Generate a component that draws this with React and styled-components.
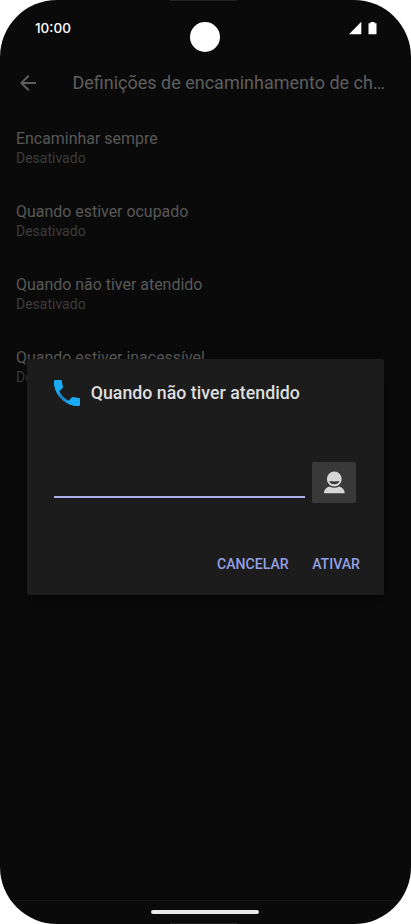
import styled, { createGlobalStyle } from "styled-components";

const settings = [
    { title: 'Encaminhar sempre', status: 'Desativado' },
    { title: 'Quando estiver ocupado', status: 'Desativado' },
    { title: 'Quando não tiver atendido', status: 'Desativado' },
    { title: 'Quando estiver inacessível', status: 'Desativado' },
]

const App = () => {
    return (
        <>
            <GlobalStyle />
            <Screen>
                <StatusBar>
                    <Time>10:00</Time>
                    <StatusIcons viewBox="0 0 28 14">
                        <path d="M0 13.2 L12.3 0.8 V13.2 Z" />
                        <path d="M19.5 2.2 h2 v-1.2 h4 v1.2 h2 v11 h-8 Z" />
                    </StatusIcons>
                </StatusBar>
                <Camera />
                <AppBar>
                    <BackIcon viewBox="0 0 24 24">
                        <path d="M20 11H7.83l5.59-5.59L12 4l-8 8 8 8 1.41-1.41L7.83 13H20v-2z" />
                    </BackIcon>
                    <Title>Definições de encaminhamento de ch…</Title>
                </AppBar>
                <List>
                    {settings.map((item) => (
                        <Item key={item.title}>
                            <ItemTitle>{item.title}</ItemTitle>
                            <ItemStatus>{item.status}</ItemStatus>
                        </Item>
                    ))}
                </List>
                <NavBar>
                    <NavHandle />
                </NavBar>
                <EdgeMark $side="top" />
                <EdgeMark $side="bottom" />
                <Dialog>
                    <DialogHeader>
                        <PhoneIcon viewBox="3 3 18 18">
                            <defs>
                                <linearGradient id="handset" x1="0" y1="0" x2="1" y2="1">
                                    <stop offset="0.3" stopColor="#1aaaf2" />
                                    <stop offset="0.48" stopColor="#1583c8" />
                                    <stop offset="0.62" stopColor="#188fd8" />
                                    <stop offset="0.7" stopColor="#1aaaf2" />
                                </linearGradient>
                            </defs>
                            <path fill="url(#handset)" d="M6.62 10.79c1.44 2.83 3.76 5.14 6.59 6.59l2.2-2.2c.27-.27.67-.36 1.02-.24 1.12.37 2.33.57 3.57.57.55 0 1 .45 1 1V20c0 .55-.45 1-1 1-9.39 0-17-7.61-17-17 0-.55.45-1 1-1h3.5c.55 0 1 .45 1 1 0 1.25.2 2.45.57 3.57.11.35.03.74-.25 1.02l-2.2 2.2z" />
                            <path fill="#1aaaf2" d="M4 3h3.5c.55 0 1 .45 1 1 0 1.25.2 2.45.57 3.57.11.35.03.74-.25 1.02l-3.4 3.4C3.8 9.5 3 6.7 3 4c0-.55.45-1 1-1zM20 21c.55 0 1-.45 1-1v-3.49c0-.55-.45-1-1-1-1.24 0-2.45-.2-3.57-.57-.35-.12-.75-.03-1.02.24l-3.4 3.4C14.5 20.3 17.2 21 20 21z" />
                        </PhoneIcon>
                        <DialogTitle>Quando não tiver atendido</DialogTitle>
                    </DialogHeader>
                    <Field>
                        <NumberInput type="tel" />
                        <ContactButton>
                            <ContactIcon viewBox="0 0 22 24">
                                <circle cx="11.3" cy="8" r="7.4" />
                                <path d="M6.3 15.6 Q11.3 18 16.3 15.6 C19.6 16.8 21.6 18.8 21.7 22.2 H0.9 C1 18.8 3 16.8 6.3 15.6 Z" />
                                <path fill="#393939" d="M6.2 10 Q11.3 10.8 16.4 10 Q15.2 13.2 11.3 13.2 Q7.4 13.2 6.2 10 Z" />
                            </ContactIcon>
                        </ContactButton>
                    </Field>
                    <Actions>
                        <Action>CANCELAR</Action>
                        <Action>ATIVAR</Action>
                    </Actions>
                </Dialog>
            </Screen>
        </>
    );
};

export default App;

const GlobalStyle = createGlobalStyle`
    body {
        margin: 0;
        background: #fff;
        font-family: Roboto, sans-serif;
    }
`
const Screen = styled.div`
    position: relative;
    display: flex;
    flex-direction: column;
    width: 411px;
    height: 924px;
    overflow: hidden;
    border-radius: 57px;
    background: #0a0a0a;
`
const StatusBar = styled.div`
    display: flex;
    justify-content: space-between;
    align-items: center;
    box-sizing: border-box;
    height: 55px;
    padding: 0 34px 0 35px;
`
const Time = styled.span`
    color: #fff;
    font-family: Inter, sans-serif;
    font-size: 13.5px;
    font-weight: 500;
`
const StatusIcons = styled.svg`
    width: 28px;
    height: 14px;
    fill: #fff;
`
const Camera = styled.div`
    position: absolute;
    top: 22px;
    left: 190px;
    width: 30px;
    height: 30px;
    border-radius: 50%;
    background: #fff;
`
const AppBar = styled.div`
    display: flex;
    align-items: center;
    height: 56px;
    padding: 0 20px 0 16px;
`
const BackIcon = styled.svg`
    flex: none;
    width: 24px;
    height: 24px;
    margin-right: 32.4px;
    fill: #5e5e5e;
`
const Title = styled.h1`
    margin: 0;
    color: #5e5e5e;
    font-size: 18px;
    font-weight: 400;
    line-height: 24px;
    white-space: nowrap;
`
const List = styled.div`
    flex: 1;
    padding-top: 17px;
`
const Item = styled.div`
    height: 73.1px;
    padding: 0 16px;
`
const ItemTitle = styled.div`
    color: #585858;
    font-size: 15.95px;
    line-height: 21px;
`
const ItemStatus = styled.div`
    color: #3c3c3c;
    font-size: 14px;
    line-height: 19px;
`
const NavBar = styled.div`
    display: flex;
    justify-content: center;
    align-items: flex-start;
    box-sizing: border-box;
    height: 24px;
    padding: 9px 1px 0 0;
    border-top: 1px solid #151515;
`
const NavHandle = styled.div`
    width: 108px;
    height: 4px;
    border-radius: 2px;
    background: #e8e8e8;
`
const EdgeMark = styled.div`
    position: absolute;
    ${props => props.$side}: 0;
    left: 170px;
    width: 67px;
    height: 1px;
    background: #242424;
`
const Dialog = styled.div`
    position: absolute;
    top: 358.5px;
    left: 26.7px;
    display: flex;
    flex-direction: column;
    box-sizing: border-box;
    width: 357.3px;
    height: 236.5px;
    padding: 21px 24px 0 27.3px;
    border-radius: 2px;
    background: #1c1c1c;
    box-shadow: 0 8px 18px rgba(0, 0, 0, 0.35);
`
const DialogHeader = styled.div`
    display: flex;
    align-items: center;
    height: 27px;
`
const PhoneIcon = styled.svg`
    flex: none;
    width: 26px;
    height: 26px;
    margin-right: 10.7px;
`
const DialogTitle = styled.h2`
    margin: 0;
    color: #dedede;
    font-size: 17.8px;
    font-weight: 500;
    line-height: 22px;
    white-space: nowrap;
`
const Field = styled.div`
    display: flex;
    align-items: flex-start;
    gap: 7.5px;
    margin-top: 55.5px;
`
const NumberInput = styled.input`
    width: 251px;
    height: 36px;
    box-sizing: border-box;
    padding: 0;
    border: none;
    border-bottom: 2px solid #a9b0ea;
    outline: none;
    background: transparent;
    color: #e2e2e2;
    font-size: 18px;
`
const ContactButton = styled.button`
    display: flex;
    flex: none;
    justify-content: center;
    align-items: center;
    width: 44px;
    height: 41px;
    padding: 0;
    border: none;
    border-radius: 2px;
    background: #393939;
`
const ContactIcon = styled.svg`
    width: 22px;
    height: 24px;
    fill: #d6d6d6;
`
const Actions = styled.div`
    display: flex;
    justify-content: flex-end;
    gap: 23.5px;
    margin-top: 50px;
`
const Action = styled.button`
    padding: 0;
    border: none;
    background: transparent;
    color: #93a0e6;
    font-family: inherit;
    font-size: 14.1px;
    font-weight: 500;
    line-height: 22px;
`
